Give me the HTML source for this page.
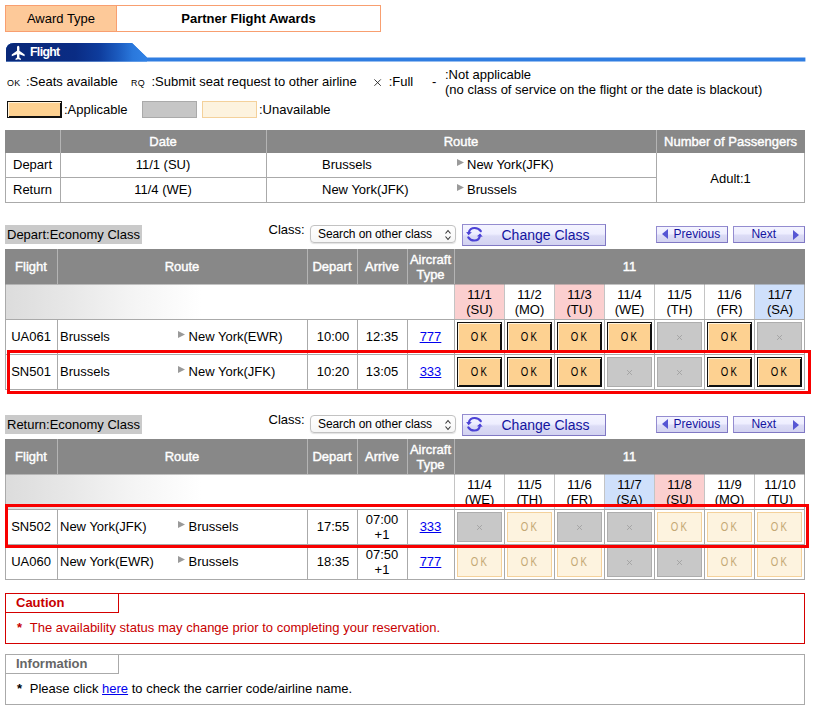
<!DOCTYPE html>
<html><head><meta charset="utf-8"><title>Award</title>
<style>
html,body{margin:0;padding:0;background:#fff}
body{width:815px;height:722px;position:relative;overflow:hidden;font-family:"Liberation Sans",sans-serif;font-size:13px;color:#000}
div{position:absolute;box-sizing:border-box;white-space:nowrap}
.t{line-height:16px}
.thead{left:5px;width:800px;height:35px;background:#888}
.vsep{width:1px;background:#b4b4b4}
.th{color:#fff;text-align:center;font-size:13px;-webkit-text-stroke:0.4px #fff}
.dategrad{left:5px;width:450px;background:linear-gradient(to right,#dcdcdc 0,#e7e7e7 60px,#f5f5f5 130px,#fff 195px);border-left:1px solid #aaa}
.dcell{text-align:center;line-height:15px;padding-top:3px;border-right:0}
.row{left:5px;width:800px;border:1px solid #aaa;border-bottom:0;background:#fff}
.vline{width:1px;background:#aaa}
.vline2{width:1px;background:#c4c4c4}
.td{font-size:13px;margin-top:-0.5px}
.c{text-align:center}
.lnk{color:#0000ee;text-decoration:underline}
.arrow{width:0;height:0;border-left:7px solid #999;border-top:3.5px solid transparent;border-bottom:3.5px solid transparent}
.cell{width:45px;height:30px;text-align:center;line-height:28.6px;font-size:12.5px}
.k{display:inline-block;transform:scaleX(0.77);letter-spacing:2.9px;margin-right:-2.9px;position:relative;left:-0.9px}
.ok{background:#fdd191;border:1px solid #111;box-shadow:inset 1px 1px 0 #fff3dc,inset -1px -1px 0 #111;color:#000}
.full{background:#c8c8c8;border:1px solid #adadad;color:#999;font-size:0}
.okd{background:#fdf3df;border:1px solid #f4d19b;color:#c4a874}
.hl{border:3px solid #f80000}
.btn{background:linear-gradient(#f4f4ff 0,#eeeeff 45%,#dcdcf6 55%,#d2d2f0 100%);border:1px solid #8078c4;border-top-color:#948cd0;border-left-color:#948cd0}
</style></head><body>


<div style="left:5px;top:5px;width:376px;height:27px;border:1px solid #f89f70;background:#fff"></div>
<div style="left:6px;top:6px;width:111px;height:25px;background:#fdc999;border-right:1px solid #f89f70;text-align:center;line-height:25px;font-size:13px">Award Type</div>
<div style="left:117px;top:6px;width:263px;height:25px;text-align:center;line-height:25px;font-weight:bold;font-size:13px">Partner Flight Awards</div>


<svg style="position:absolute;left:0.6px;top:40.6px" width="812" height="24" viewBox="0 0 812 24">
<defs><linearGradient id="g1" x1="0" x2="1" y1="0" y2="0"><stop offset="0" stop-color="#092878"/><stop offset="0.49" stop-color="#0a2c84"/><stop offset="0.66" stop-color="#0e3c9c"/><stop offset="0.80" stop-color="#1c5cc0"/><stop offset="0.90" stop-color="#2a78dc"/><stop offset="1" stop-color="#3182e6"/></linearGradient></defs>
<path d="M5 20.6 L5 10 Q5 2 13 2 L131 2 L146 16.4 L804.4 16.4 L804.4 20.6 Z" fill="#2f7de1"/>
<path d="M5 20.6 L5 10 Q5 2 13 2 L131 2 L146 16.4 L146 20.6 Z" fill="url(#g1)"/>
<rect x="5" y="17" width="800" height="4" fill="#2f7de1" opacity="0"/>
<path transform="translate(17.2 11.9) scale(0.92 1.06) translate(-18.5 -12.3)" d="M18.5 5.5 c0.9 0 1.3 0.8 1.3 1.8 v3 l5.7 3.6 v1.6 l-5.7 -1.9 v3 l1.6 1.3 v1.2 l-2.9 -0.9 l-2.9 0.9 v-1.2 l1.6 -1.3 v-3 l-5.7 1.9 v-1.6 l5.7 -3.6 v-3 c0 -1 0.4 -1.8 1.3 -1.8z" fill="#fff"/>
</svg>
<div style="left:30px;top:44px;color:#fff;font-weight:bold;font-size:12.3px;line-height:16px;letter-spacing:-0.65px">Flight</div>


<div style="left:6.6px;top:74.7px;font-size:9.6px;line-height:16px;transform:scaleX(0.93);transform-origin:left center;letter-spacing:0.2px">OK</div>
<div class="t" style="left:26px;top:74px">:Seats available</div>
<div style="left:131.2px;top:74.7px;font-size:9.6px;line-height:16px;transform:scaleX(0.93);transform-origin:left center;letter-spacing:0.2px">RQ</div>
<div class="t" style="left:151.5px;top:74px">:Submit seat request to other airline</div>
<svg style="position:absolute;left:373px;top:78px" width="9" height="9" viewBox="0 0 9 9"><path d="M1.4 1.4 L7.8 7.8 M7.8 1.4 L1.4 7.8" stroke="#222" stroke-width="0.9" fill="none"/></svg>
<div class="t" style="left:388.7px;top:74px">:Full</div>
<div class="t" style="left:432px;top:74px">-</div>
<div class="t" style="left:445px;top:67px;line-height:15px">:Not applicable<br>(no class of service on the flight or the date is blackout)</div>
<div style="left:7px;top:101px;width:55px;height:17px;background:#fdd191;border:1px solid #111;box-shadow:inset 1px 1px 0 #fff3dc,inset -1px -1px 0 #111"></div>
<div class="t" style="left:64px;top:102px">:Applicable</div>
<div style="left:142px;top:101px;width:55px;height:17px;background:#c6c6c6;border:1px solid #aaa"></div>
<div style="left:202px;top:101px;width:55px;height:17px;background:#fdf3df;border:1px solid #f4d19b"></div>
<div class="t" style="left:259px;top:102px">:Unavailable</div>


<div style="left:5px;top:130px;width:800px;height:73px;border:1px solid #aaa;background:#fff"></div>
<div style="left:5px;top:130px;width:800px;height:23px;background:#888"></div>
<div class="vsep" style="left:60px;top:130px;height:23px"></div>
<div class="vsep" style="left:266px;top:130px;height:23px"></div>
<div class="vsep" style="left:656px;top:130px;height:23px"></div>
<div class="th" style="left:60px;width:206px;top:130px;line-height:23px">Date</div>
<div class="th" style="left:266px;width:390px;top:130px;line-height:23px">Route</div>
<div class="th" style="left:656px;width:149px;top:130px;line-height:23px;font-size:13px">Number of Passengers</div>
<div class="vline" style="left:60px;top:153px;height:49px"></div>
<div class="vline" style="left:266px;top:153px;height:49px"></div>
<div class="vline" style="left:656px;top:153px;height:49px"></div>
<div style="left:5px;top:177px;width:651px;height:1px;background:#aaa"></div>
<div class="td" style="left:13px;top:153px;line-height:24px">Depart</div>
<div class="td" style="left:13px;top:178px;line-height:24px">Return</div>
<div class="td c" style="left:60px;width:206px;top:153px;line-height:24px">11/1 (SU)</div>
<div class="td c" style="left:60px;width:206px;top:178px;line-height:24px">11/4 (WE)</div>
<div class="td" style="left:322px;top:153px;line-height:24px">Brussels</div>
<div class="td" style="left:322px;top:178px;line-height:24px">New York(JFK)</div>
<svg class="arw" style="position:absolute;left:456.7px;top:159px" width="8" height="8" viewBox="0 0 8 8"><path d="M0 0 L7 3.5 L0 7 Z" fill="#9a9a9a"/></svg>
<svg class="arw" style="position:absolute;left:456.7px;top:184px" width="8" height="8" viewBox="0 0 8 8"><path d="M0 0 L7 3.5 L0 7 Z" fill="#9a9a9a"/></svg>
<div class="td" style="left:467px;top:153px;line-height:24px">New York(JFK)</div>
<div class="td" style="left:467px;top:178px;line-height:24px">Brussels</div>
<div class="td c" style="left:656px;width:149px;top:154px;line-height:49px">Adult:1</div>


<div style="left:5px;top:225px;width:137px;height:19px;background:#cacaca;line-height:19px;padding-left:2px;font-size:13px">Depart:Economy Class</div>
<div class="t" style="left:268.5px;top:222px">Class:</div>
<div style="left:310px;top:225px;width:146px;height:18px;border:1px solid #c2c2c2;border-radius:4px;background:linear-gradient(#fff,#f6f6f6);box-shadow:0 1px 1px rgba(0,0,0,0.12);font-size:12px;line-height:17px;padding-left:7px;letter-spacing:-0.1px">Search on other class</div>
<svg style="position:absolute;left:443.7px;top:228.5px" width="8" height="12" viewBox="0 0 8 12"><path d="M1.5 4.5 L4 1.5 L6.5 4.5 M1.5 7.5 L4 10.5 L6.5 7.5" stroke="#333" stroke-width="1.1" fill="none"/></svg>
<div class="btn" style="left:462px;top:224px;width:144px;height:22px"></div>
<svg style="position:absolute;left:466px;top:226px" width="18" height="18" viewBox="0 0 18 18"><g fill="none" stroke="#4b42d6" stroke-width="2.2" stroke-linecap="round"><path d="M2.8 7 C3.2 3.6 6 2 8.6 2 C11.4 2 13.6 3.3 14.8 5.2"/><path d="M13.9 9.6 C13.5 13 10.9 14.5 8.2 14.5 C5.7 14.5 3.5 13.3 2.3 11.4"/></g><path d="M0.1 5.9 L5.9 6.3 L2.6 9.2 Z" fill="#4b42d6"/><path d="M16.7 10.7 L10.9 10.3 L14.1 7.4 Z" fill="#4b42d6"/></svg>
<div style="left:501.5px;top:226px;font-size:14px;line-height:18px;color:#1414a0">Change Class</div>
<div class="btn" style="left:656px;top:226px;width:72px;height:17px"></div>
<div style="left:662px;top:229px;width:0;height:0;border-right:6px solid #5656d4;border-top:5px solid transparent;border-bottom:5px solid transparent"></div>
<div style="left:673.5px;top:226px;line-height:17px;color:#1414a0;font-size:12px">Previous</div>
<div class="btn" style="left:733px;top:226px;width:72px;height:17px"></div>
<div style="left:751.4px;top:226px;line-height:17px;color:#1414a0;font-size:12px">Next</div>
<div style="left:793px;top:230px;width:0;height:0;border-left:6px solid #5656d4;border-top:5px solid transparent;border-bottom:5px solid transparent"></div>

<div class="thead" style="top:249px"></div>
<div class="vsep" style="left:57px;top:249px;height:35px"></div>
<div class="vsep" style="left:307px;top:249px;height:35px"></div>
<div class="vsep" style="left:357px;top:249px;height:35px"></div>
<div class="vsep" style="left:407px;top:249px;height:35px"></div>
<div class="vsep" style="left:454px;top:249px;height:35px"></div>
<div class="th" style="left:5px;width:52px;top:249px;height:35px;line-height:35px">Flight</div>
<div class="th" style="left:57px;width:250px;top:249px;height:35px;line-height:35px">Route</div>
<div class="th" style="left:307px;width:50px;top:249px;height:35px;line-height:35px">Depart</div>
<div class="th" style="left:357px;width:50px;top:249px;height:35px;line-height:35px">Arrive</div>
<div class="th" style="left:407px;width:47px;top:251.8px;line-height:15px">Aircraft<br>Type</div>
<div class="th" style="left:454px;width:351px;top:249px;height:35px;line-height:35px">11</div>
<div style="left:5px;width:800px;top:284px;height:1px;background:rgba(136,136,136,0.5);z-index:3"></div>
<div class="dategrad" style="top:284px;height:35px"></div>
<div class="dcell" style="left:455px;width:49px;top:284px;height:35px;background:#fbcfcf">11/1<br>(SU)</div>
<div class="dcell" style="left:505px;width:49px;top:284px;height:35px;background:#fff">11/2<br>(MO)</div>
<div class="dcell" style="left:555px;width:49px;top:284px;height:35px;background:#fbcfcf">11/3<br>(TU)</div>
<div class="dcell" style="left:605px;width:49px;top:284px;height:35px;background:#fff">11/4<br>(WE)</div>
<div class="dcell" style="left:655px;width:49px;top:284px;height:35px;background:#fff">11/5<br>(TH)</div>
<div class="dcell" style="left:705px;width:49px;top:284px;height:35px;background:#fff">11/6<br>(FR)</div>
<div class="dcell" style="left:755px;width:50px;top:284px;height:35px;background:#cfe0fb">11/7<br>(SA)</div>
<div class="vline2" style="left:454px;top:284px;height:35px"></div>
<div class="vline2" style="left:504px;top:284px;height:35px"></div>
<div class="vline2" style="left:554px;top:284px;height:35px"></div>
<div class="vline2" style="left:604px;top:284px;height:35px"></div>
<div class="vline2" style="left:654px;top:284px;height:35px"></div>
<div class="vline2" style="left:704px;top:284px;height:35px"></div>
<div class="vline2" style="left:754px;top:284px;height:35px"></div>
<div class="vline" style="left:804px;top:284px;height:35px"></div>
<div class="row" style="top:319px;height:35px"></div>
<div class="vline" style="left:57px;top:319px;height:35px"></div>
<div class="vline" style="left:307px;top:319px;height:35px"></div>
<div class="vline" style="left:357px;top:319px;height:35px"></div>
<div class="vline" style="left:407px;top:319px;height:35px"></div>
<div class="vline" style="left:454px;top:319px;height:35px"></div>
<div class="vline" style="left:504px;top:319px;height:35px"></div>
<div class="vline" style="left:554px;top:319px;height:35px"></div>
<div class="vline" style="left:604px;top:319px;height:35px"></div>
<div class="vline" style="left:654px;top:319px;height:35px"></div>
<div class="vline" style="left:704px;top:319px;height:35px"></div>
<div class="vline" style="left:754px;top:319px;height:35px"></div>
<div class="td" style="left:11.2px;top:319px;line-height:35px">UA061</div>
<div class="td" style="left:60px;top:319px;line-height:35px">Brussels</div>
<svg style="position:absolute;left:178.2px;top:330.9px" width="8" height="8" viewBox="0 0 8 8"><path d="M0 0 L7 3.5 L0 7 Z" fill="#9a9a9a"/></svg>
<div class="td" style="left:188.6px;top:319px;line-height:35px">New York(EWR)</div>
<div class="td c" style="left:308px;width:50px;top:319px;line-height:35px">10:00</div>
<div class="td c" style="left:357px;width:50px;top:319px;line-height:35px">12:35</div>
<div class="td c lnk" style="left:407px;width:47px;top:319px;line-height:35px">777</div>
<div class="cell ok" style="left:457px;top:322px"><span class="k">OK</span></div>
<div class="cell ok" style="left:507px;top:322px"><span class="k">OK</span></div>
<div class="cell ok" style="left:557px;top:322px"><span class="k">OK</span></div>
<div class="cell ok" style="left:607px;top:322px"><span class="k">OK</span></div>
<div class="cell full" style="left:657px;top:322px"><svg style="position:absolute;left:18px;top:11px" width="7" height="7" viewBox="0 0 7 7"><path d="M1.1 1.1 L5.9 5.9 M5.9 1.1 L1.1 5.9" stroke="#a0a0a0" stroke-width="0.9" fill="none"/></svg></div>
<div class="cell ok" style="left:707px;top:322px"><span class="k">OK</span></div>
<div class="cell full" style="left:757px;top:322px"><svg style="position:absolute;left:18px;top:11px" width="7" height="7" viewBox="0 0 7 7"><path d="M1.1 1.1 L5.9 5.9 M5.9 1.1 L1.1 5.9" stroke="#a0a0a0" stroke-width="0.9" fill="none"/></svg></div>
<div class="row" style="top:354px;height:35px"></div>
<div class="vline" style="left:57px;top:354px;height:35px"></div>
<div class="vline" style="left:307px;top:354px;height:35px"></div>
<div class="vline" style="left:357px;top:354px;height:35px"></div>
<div class="vline" style="left:407px;top:354px;height:35px"></div>
<div class="vline" style="left:454px;top:354px;height:35px"></div>
<div class="vline" style="left:504px;top:354px;height:35px"></div>
<div class="vline" style="left:554px;top:354px;height:35px"></div>
<div class="vline" style="left:604px;top:354px;height:35px"></div>
<div class="vline" style="left:654px;top:354px;height:35px"></div>
<div class="vline" style="left:704px;top:354px;height:35px"></div>
<div class="vline" style="left:754px;top:354px;height:35px"></div>
<div class="td" style="left:11.2px;top:354px;line-height:35px">SN501</div>
<div class="td" style="left:60px;top:354px;line-height:35px">Brussels</div>
<svg style="position:absolute;left:178.2px;top:365.9px" width="8" height="8" viewBox="0 0 8 8"><path d="M0 0 L7 3.5 L0 7 Z" fill="#9a9a9a"/></svg>
<div class="td" style="left:188.6px;top:354px;line-height:35px">New York(JFK)</div>
<div class="td c" style="left:308px;width:50px;top:354px;line-height:35px">10:20</div>
<div class="td c" style="left:357px;width:50px;top:354px;line-height:35px">13:05</div>
<div class="td c lnk" style="left:407px;width:47px;top:354px;line-height:35px">333</div>
<div class="cell ok" style="left:457px;top:357px"><span class="k">OK</span></div>
<div class="cell ok" style="left:507px;top:357px"><span class="k">OK</span></div>
<div class="cell ok" style="left:557px;top:357px"><span class="k">OK</span></div>
<div class="cell full" style="left:607px;top:357px"><svg style="position:absolute;left:18px;top:11px" width="7" height="7" viewBox="0 0 7 7"><path d="M1.1 1.1 L5.9 5.9 M5.9 1.1 L1.1 5.9" stroke="#a0a0a0" stroke-width="0.9" fill="none"/></svg></div>
<div class="cell full" style="left:657px;top:357px"><svg style="position:absolute;left:18px;top:11px" width="7" height="7" viewBox="0 0 7 7"><path d="M1.1 1.1 L5.9 5.9 M5.9 1.1 L1.1 5.9" stroke="#a0a0a0" stroke-width="0.9" fill="none"/></svg></div>
<div class="cell ok" style="left:707px;top:357px"><span class="k">OK</span></div>
<div class="cell ok" style="left:757px;top:357px"><span class="k">OK</span></div>
<div style="left:5px;top:389px;width:800px;height:1px;background:#aaa"></div>
<div class="hl" style="left:7px;top:350px;width:804px;height:44px"></div>

<div style="left:5px;top:415px;width:137px;height:19px;background:#cacaca;line-height:19px;padding-left:2px;font-size:13px">Return:Economy Class</div>
<div class="t" style="left:268.5px;top:412px">Class:</div>
<div style="left:310px;top:415px;width:146px;height:18px;border:1px solid #c2c2c2;border-radius:4px;background:linear-gradient(#fff,#f6f6f6);box-shadow:0 1px 1px rgba(0,0,0,0.12);font-size:12px;line-height:17px;padding-left:7px;letter-spacing:-0.1px">Search on other class</div>
<svg style="position:absolute;left:443.7px;top:418.5px" width="8" height="12" viewBox="0 0 8 12"><path d="M1.5 4.5 L4 1.5 L6.5 4.5 M1.5 7.5 L4 10.5 L6.5 7.5" stroke="#333" stroke-width="1.1" fill="none"/></svg>
<div class="btn" style="left:462px;top:414px;width:144px;height:22px"></div>
<svg style="position:absolute;left:466px;top:416px" width="18" height="18" viewBox="0 0 18 18"><g fill="none" stroke="#4b42d6" stroke-width="2.2" stroke-linecap="round"><path d="M2.8 7 C3.2 3.6 6 2 8.6 2 C11.4 2 13.6 3.3 14.8 5.2"/><path d="M13.9 9.6 C13.5 13 10.9 14.5 8.2 14.5 C5.7 14.5 3.5 13.3 2.3 11.4"/></g><path d="M0.1 5.9 L5.9 6.3 L2.6 9.2 Z" fill="#4b42d6"/><path d="M16.7 10.7 L10.9 10.3 L14.1 7.4 Z" fill="#4b42d6"/></svg>
<div style="left:501.5px;top:416px;font-size:14px;line-height:18px;color:#1414a0">Change Class</div>
<div class="btn" style="left:656px;top:416px;width:72px;height:17px"></div>
<div style="left:662px;top:419px;width:0;height:0;border-right:6px solid #5656d4;border-top:5px solid transparent;border-bottom:5px solid transparent"></div>
<div style="left:673.5px;top:416px;line-height:17px;color:#1414a0;font-size:12px">Previous</div>
<div class="btn" style="left:733px;top:416px;width:72px;height:17px"></div>
<div style="left:751.4px;top:416px;line-height:17px;color:#1414a0;font-size:12px">Next</div>
<div style="left:793px;top:420px;width:0;height:0;border-left:6px solid #5656d4;border-top:5px solid transparent;border-bottom:5px solid transparent"></div>

<div class="thead" style="top:439px"></div>
<div class="vsep" style="left:57px;top:439px;height:35px"></div>
<div class="vsep" style="left:307px;top:439px;height:35px"></div>
<div class="vsep" style="left:357px;top:439px;height:35px"></div>
<div class="vsep" style="left:407px;top:439px;height:35px"></div>
<div class="vsep" style="left:454px;top:439px;height:35px"></div>
<div class="th" style="left:5px;width:52px;top:439px;height:35px;line-height:35px">Flight</div>
<div class="th" style="left:57px;width:250px;top:439px;height:35px;line-height:35px">Route</div>
<div class="th" style="left:307px;width:50px;top:439px;height:35px;line-height:35px">Depart</div>
<div class="th" style="left:357px;width:50px;top:439px;height:35px;line-height:35px">Arrive</div>
<div class="th" style="left:407px;width:47px;top:441.8px;line-height:15px">Aircraft<br>Type</div>
<div class="th" style="left:454px;width:351px;top:439px;height:35px;line-height:35px">11</div>
<div style="left:5px;width:800px;top:474px;height:1px;background:rgba(136,136,136,0.5);z-index:3"></div>
<div class="dategrad" style="top:474px;height:35px"></div>
<div class="dcell" style="left:455px;width:49px;top:474px;height:35px;background:#fff">11/4<br>(WE)</div>
<div class="dcell" style="left:505px;width:49px;top:474px;height:35px;background:#fff">11/5<br>(TH)</div>
<div class="dcell" style="left:555px;width:49px;top:474px;height:35px;background:#fff">11/6<br>(FR)</div>
<div class="dcell" style="left:605px;width:49px;top:474px;height:35px;background:#cfe0fb">11/7<br>(SA)</div>
<div class="dcell" style="left:655px;width:49px;top:474px;height:35px;background:#fbcfcf">11/8<br>(SU)</div>
<div class="dcell" style="left:705px;width:49px;top:474px;height:35px;background:#fff">11/9<br>(MO)</div>
<div class="dcell" style="left:755px;width:50px;top:474px;height:35px;background:#fff">11/10<br>(TU)</div>
<div class="vline2" style="left:454px;top:474px;height:35px"></div>
<div class="vline2" style="left:504px;top:474px;height:35px"></div>
<div class="vline2" style="left:554px;top:474px;height:35px"></div>
<div class="vline2" style="left:604px;top:474px;height:35px"></div>
<div class="vline2" style="left:654px;top:474px;height:35px"></div>
<div class="vline2" style="left:704px;top:474px;height:35px"></div>
<div class="vline2" style="left:754px;top:474px;height:35px"></div>
<div class="vline" style="left:804px;top:474px;height:35px"></div>
<div class="row" style="top:509px;height:35px"></div>
<div class="vline" style="left:57px;top:509px;height:35px"></div>
<div class="vline" style="left:307px;top:509px;height:35px"></div>
<div class="vline" style="left:357px;top:509px;height:35px"></div>
<div class="vline" style="left:407px;top:509px;height:35px"></div>
<div class="vline" style="left:454px;top:509px;height:35px"></div>
<div class="vline" style="left:504px;top:509px;height:35px"></div>
<div class="vline" style="left:554px;top:509px;height:35px"></div>
<div class="vline" style="left:604px;top:509px;height:35px"></div>
<div class="vline" style="left:654px;top:509px;height:35px"></div>
<div class="vline" style="left:704px;top:509px;height:35px"></div>
<div class="vline" style="left:754px;top:509px;height:35px"></div>
<div class="td" style="left:11.2px;top:509px;line-height:35px">SN502</div>
<div class="td" style="left:60px;top:509px;line-height:35px">New York(JFK)</div>
<svg style="position:absolute;left:178.2px;top:520.9px" width="8" height="8" viewBox="0 0 8 8"><path d="M0 0 L7 3.5 L0 7 Z" fill="#9a9a9a"/></svg>
<div class="td" style="left:188.6px;top:509px;line-height:35px">Brussels</div>
<div class="td c" style="left:308px;width:50px;top:509px;line-height:35px">17:55</div>
<div class="td c" style="left:357px;width:50px;top:512px;line-height:15px">07:00<br>+1</div>
<div class="td c lnk" style="left:407px;width:47px;top:509px;line-height:35px">333</div>
<div class="cell full" style="left:457px;top:512px"><svg style="position:absolute;left:18px;top:11px" width="7" height="7" viewBox="0 0 7 7"><path d="M1.1 1.1 L5.9 5.9 M5.9 1.1 L1.1 5.9" stroke="#a0a0a0" stroke-width="0.9" fill="none"/></svg></div>
<div class="cell okd" style="left:507px;top:512px"><span class="k">OK</span></div>
<div class="cell full" style="left:557px;top:512px"><svg style="position:absolute;left:18px;top:11px" width="7" height="7" viewBox="0 0 7 7"><path d="M1.1 1.1 L5.9 5.9 M5.9 1.1 L1.1 5.9" stroke="#a0a0a0" stroke-width="0.9" fill="none"/></svg></div>
<div class="cell full" style="left:607px;top:512px"><svg style="position:absolute;left:18px;top:11px" width="7" height="7" viewBox="0 0 7 7"><path d="M1.1 1.1 L5.9 5.9 M5.9 1.1 L1.1 5.9" stroke="#a0a0a0" stroke-width="0.9" fill="none"/></svg></div>
<div class="cell okd" style="left:657px;top:512px"><span class="k">OK</span></div>
<div class="cell okd" style="left:707px;top:512px"><span class="k">OK</span></div>
<div class="cell okd" style="left:757px;top:512px"><span class="k">OK</span></div>
<div class="row" style="top:544px;height:35px"></div>
<div class="vline" style="left:57px;top:544px;height:35px"></div>
<div class="vline" style="left:307px;top:544px;height:35px"></div>
<div class="vline" style="left:357px;top:544px;height:35px"></div>
<div class="vline" style="left:407px;top:544px;height:35px"></div>
<div class="vline" style="left:454px;top:544px;height:35px"></div>
<div class="vline" style="left:504px;top:544px;height:35px"></div>
<div class="vline" style="left:554px;top:544px;height:35px"></div>
<div class="vline" style="left:604px;top:544px;height:35px"></div>
<div class="vline" style="left:654px;top:544px;height:35px"></div>
<div class="vline" style="left:704px;top:544px;height:35px"></div>
<div class="vline" style="left:754px;top:544px;height:35px"></div>
<div class="td" style="left:11.2px;top:544px;line-height:35px">UA060</div>
<div class="td" style="left:60px;top:544px;line-height:35px">New York(EWR)</div>
<svg style="position:absolute;left:178.2px;top:555.9px" width="8" height="8" viewBox="0 0 8 8"><path d="M0 0 L7 3.5 L0 7 Z" fill="#9a9a9a"/></svg>
<div class="td" style="left:188.6px;top:544px;line-height:35px">Brussels</div>
<div class="td c" style="left:308px;width:50px;top:544px;line-height:35px">18:35</div>
<div class="td c" style="left:357px;width:50px;top:547px;line-height:15px">07:50<br>+1</div>
<div class="td c lnk" style="left:407px;width:47px;top:544px;line-height:35px">777</div>
<div class="cell okd" style="left:457px;top:547px"><span class="k">OK</span></div>
<div class="cell okd" style="left:507px;top:547px"><span class="k">OK</span></div>
<div class="cell okd" style="left:557px;top:547px"><span class="k">OK</span></div>
<div class="cell full" style="left:607px;top:547px"><svg style="position:absolute;left:18px;top:11px" width="7" height="7" viewBox="0 0 7 7"><path d="M1.1 1.1 L5.9 5.9 M5.9 1.1 L1.1 5.9" stroke="#a0a0a0" stroke-width="0.9" fill="none"/></svg></div>
<div class="cell full" style="left:657px;top:547px"><svg style="position:absolute;left:18px;top:11px" width="7" height="7" viewBox="0 0 7 7"><path d="M1.1 1.1 L5.9 5.9 M5.9 1.1 L1.1 5.9" stroke="#a0a0a0" stroke-width="0.9" fill="none"/></svg></div>
<div class="cell okd" style="left:707px;top:547px"><span class="k">OK</span></div>
<div class="cell okd" style="left:757px;top:547px"><span class="k">OK</span></div>
<div style="left:5px;top:579px;width:800px;height:1px;background:#aaa"></div>
<div class="hl" style="left:5px;top:504px;width:804px;height:44px"></div>

<div style="left:5px;top:593px;width:800px;height:51px;border:1px solid #d40000"></div>
<div style="left:5px;top:593px;width:114px;height:20px;border:1px solid #d40000;color:#c80000;font-weight:bold;line-height:18px;padding-left:10px">Caution</div>
<div style="left:17px;top:620px;color:#c80000;line-height:16px;font-weight:bold">*</div><div style="left:29.8px;top:620px;color:#c80000;line-height:16px;letter-spacing:0.01px">The availability status may change prior to completing your reservation.</div>
<div style="left:5px;top:654px;width:800px;height:51px;border:1px solid #aaa"></div>
<div style="left:5px;top:654px;width:114px;height:20px;border:1px solid #aaa;color:#666;font-weight:bold;line-height:18px;padding-left:10px">Information</div>
<div style="left:17px;top:680.5px;line-height:16px;font-weight:bold">*</div><div style="left:29.8px;top:680.5px;line-height:16px">Please click <span style="color:#0000ee;text-decoration:underline">here</span> to check the carrier code/airline name.</div>

</body></html>
